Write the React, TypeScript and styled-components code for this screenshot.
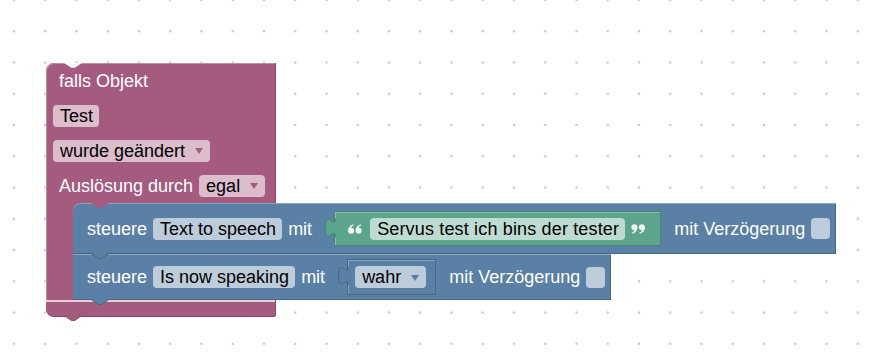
import React from "react";
import styled, { createGlobalStyle } from "styled-components";

type Palette = { main: string; light: string; dark: string; field: string };

const PURPLE: Palette = { main: "#a55b80", light: "#c08ca6", dark: "#844966", field: "#dbbdcc" };
const BLUE: Palette = { main: "#5b80a5", light: "#8ca6c0", dark: "#496684", field: "#bdccdb" };
const GREEN: Palette = { main: "#5ba58c", light: "#8cc0ae", dark: "#498470", field: "#bddbd1" };

const GlobalStyle = createGlobalStyle`
  html, body {
    margin: 0;
    padding: 0;
    background: #fff;
  }
  body {
    font-family: "Liberation Sans", Arial, sans-serif;
  }
`;

const Workspace = styled.div`
  width: 875px;
  height: 363px;
  overflow: hidden;
  box-sizing: border-box;
  padding: 63px 0 0 46px;
  background-color: #fff;
  background-image: radial-gradient(circle, #c6c6c6 1.1px, transparent 1.6px);
  background-size: 31.25px 31.25px;
  background-position: -1.625px -15.625px;
`;

/* the purple "falls Objekt" C-block */
const EventBlock = styled.div`
  display: flex;
  flex-direction: column;
  width: 229px;
`;

const Head = styled.div`
  position: relative;
  background: ${PURPLE.main};
  border-radius: 8px 0 0 0;
  padding-left: 7px;
  box-shadow: inset 1px 1px 0 ${PURPLE.light}, 1px 0 0 ${PURPLE.dark};
`;

const Row = styled.div`
  display: flex;
  align-items: center;
  height: 35px;
`;

const Label = styled.span`
  color: #fff;
  font-size: 18px;
  line-height: 1;
  padding: 0 6px;
  white-space: nowrap;
`;

const Field = styled.span<{ $bg: string; $track?: number }>`
  display: inline-flex;
  align-items: center;
  height: 22px;
  padding: 0 6px 0 7px;
  border-radius: 4px;
  background: ${({ $bg }) => $bg};
  color: #000;
  font-size: 18px;
  line-height: 1;
  letter-spacing: ${({ $track }) => $track ?? 0}px;
  white-space: nowrap;
`;

const Arrow = styled.span<{ $color: string }>`
  display: inline-block;
  width: 0;
  height: 0;
  margin: 1px 1px 0 10px;
  border-left: 4px solid transparent;
  border-right: 4px solid transparent;
  border-top: 6px solid ${({ $color }) => $color};
`;

const StatementRow = styled.div`
  display: flex;
  width: max-content;
`;

const LeftArm = styled.div`
  width: 27px;
  flex-shrink: 0;
  background: ${PURPLE.main};
  box-shadow: inset 1px 0 0 ${PURPLE.light};
`;

const Stack = styled.div`
  display: flex;
  flex-direction: column;
  align-items: flex-start;
  background: linear-gradient(${PURPLE.main}, ${PURPLE.main}) no-repeat 0 0 / 10px 10px;
`;

const StmtBlock = styled.div<{ $h: number; $first?: boolean }>`
  position: relative;
  display: flex;
  align-items: center;
  height: ${({ $h }) => $h}px;
  padding: 0 6px 0 8px;
  background: ${BLUE.main};
  border-radius: ${({ $first }) => ($first ? "8px 0 0 0" : "0")};
  box-shadow: inset 0 1px 0 ${BLUE.light}, inset 0 -1px 0 ${BLUE.dark},
    inset -1px 0 0 ${BLUE.dark};
`;

const BottomArm = styled.div`
  position: relative;
  height: 16px;
  background: ${PURPLE.main};
  border-radius: 0 0 0 8px;
  box-shadow: inset 0 2px 0 #e6cfdb, 1px 0 0 ${PURPLE.dark}, 0 1px 0 ${PURPLE.dark};
`;

const ValueBlock = styled.div<{ $c: Palette; $h: number; $pl: number; $pr: number }>`
  position: relative;
  display: flex;
  align-items: center;
  box-sizing: border-box;
  height: ${({ $h }) => $h}px;
  margin: 0 7px 0 16px;
  padding: 0 ${({ $pr }) => $pr}px 0 ${({ $pl }) => $pl}px;
  background: ${({ $c }) => $c.main};
  border: 1px solid ${({ $c }) => $c.dark};
  box-shadow: inset 1px 1px 0 ${({ $c }) => $c.light};
`;

const Checkbox = styled.span`
  display: inline-block;
  width: 19px;
  height: 21px;
  border-radius: 4px;
  background: ${BLUE.field};
`;

const QuoteSvg = styled.svg<{ $gap: string }>`
  display: block;
  margin: ${({ $gap }) => $gap};
  flex-shrink: 0;
`;

const NotchSvg = styled.svg`
  position: absolute;
  top: 0;
  left: 18px;
  display: block;
`;

const TabSvg = styled.svg`
  position: absolute;
  bottom: -5px;
  left: 17px;
  display: block;
  z-index: 2;
  overflow: visible;
`;

const PlugSvg = styled.svg`
  position: absolute;
  left: -11px;
  top: 6px;
  display: block;
  overflow: visible;
`;

const Notch = ({ fill }: { fill: string }) => (
  <NotchSvg width="18" height="5" viewBox="0 0 18 5">
    <path d="M0 0 L7.2 4.8 L10.8 4.8 L18 0 Z" fill={fill} />
  </NotchSvg>
);

const Tab = ({ c }: { c: Palette }) => (
  <TabSvg width="20" height="6" viewBox="-1 -1 20 6">
    <path d="M0 -1 L7.2 4.4 L10.8 4.4 L18 -1 Z" fill={c.main} />
    <path d="M0 -0.6 L7.2 4.4 L10.8 4.4 L18 -0.6" fill="none" stroke={c.dark} />
  </TabSvg>
);

const Plug = ({ c }: { c: Palette }) => (
  <PlugSvg width="12" height="20" viewBox="0 0 12 20">
    <path d="M12 0 V0.5 c0 12.5 -10.5 -10 -10.5 9.4 s10.5 -3.1 10.5 9.4 V20 Z" fill={c.main} />
    <path d="M11.5 0.5 c0 12.5 -10 -10 -10 9.4 s10 -3.1 10 9.4" fill="none" stroke={c.dark} />
  </PlugSvg>
);

const QUOTE_FILL = "#eef7f3";

const OpenQuote = () => (
  <QuoteSvg $gap="0 8px 0 0" width="14" height="10" viewBox="0 0 14 10">
    <g fill={QUOTE_FILL}>
      <circle cx="3.1" cy="6.8" r="3" />
      <path d="M0.1 6.8 C0.1 3.4 2 1.2 5.3 0.2 L5.8 1.2 C4.1 2 3.2 3 3 4 Z" />
      <circle cx="10.6" cy="6.8" r="3" />
      <path d="M7.6 6.8 C7.6 3.4 9.5 1.2 12.8 0.2 L13.3 1.2 C11.6 2 10.7 3 10.5 4 Z" />
    </g>
  </QuoteSvg>
);

const CloseQuote = () => (
  <QuoteSvg $gap="0 0 0 6px" width="14" height="10" viewBox="0 0 14 10">
    <g fill={QUOTE_FILL}>
      <circle cx="3.4" cy="3.2" r="3" />
      <path d="M6.4 3.2 C6.4 6.6 4.5 8.8 1.2 9.8 L0.7 8.8 C2.4 8 3.3 7 3.5 6 Z" />
      <circle cx="10.9" cy="3.2" r="3" />
      <path d="M13.9 3.2 C13.9 6.6 12 8.8 8.7 9.8 L8.2 8.8 C9.9 8 10.8 7 11 6 Z" />
    </g>
  </QuoteSvg>
);

const Dropdown = ({ text, c }: { text: string; c: Palette }) => (
  <Field $bg={c.field}>
    {text}
    <Arrow $color={c.main} />
  </Field>
);

export default function App() {
  return (
    <>
      <GlobalStyle />
      <Workspace>
        <EventBlock>
          <Head>
            <Notch fill="#fff" />
            <Row>
              <Label>falls Objekt</Label>
            </Row>
            <Row>
              <Field $bg={PURPLE.field}>Test</Field>
            </Row>
            <Row>
              <Dropdown text="wurde geändert" c={PURPLE} />
            </Row>
            <Row>
              <Label>Auslösung durch</Label>
              <Dropdown text="egal" c={PURPLE} />
            </Row>
          </Head>

          <StatementRow>
            <LeftArm />
            <Stack>
              <StmtBlock $h={51} $first>
                <Notch fill={PURPLE.main} />
                <Label>steuere</Label>
                <Field $bg={BLUE.field}>Text to speech</Field>
                <Label>mit</Label>
                <ValueBlock $c={GREEN} $h={35} $pl={13} $pr={15}>
                  <Plug c={GREEN} />
                  <OpenQuote />
                  <Field $bg={GREEN.field} $track={0.16}>
                    Servus test ich bins der tester
                  </Field>
                  <CloseQuote />
                </ValueBlock>
                <Label>mit Verzögerung</Label>
                <Checkbox />
                <Tab c={BLUE} />
              </StmtBlock>

              <StmtBlock $h={46}>
                <Label>steuere</Label>
                <Field $bg={BLUE.field}>Is now speaking</Field>
                <Label>mit</Label>
                <ValueBlock $c={BLUE} $h={36} $pl={7} $pr={9}>
                  <Plug c={BLUE} />
                  <Dropdown text="wahr" c={BLUE} />
                </ValueBlock>
                <Label>mit Verzögerung</Label>
                <Checkbox />
                <Tab c={BLUE} />
              </StmtBlock>
            </Stack>
          </StatementRow>

          <BottomArm>
            <Tab c={PURPLE} />
          </BottomArm>
        </EventBlock>
      </Workspace>
    </>
  );
}
